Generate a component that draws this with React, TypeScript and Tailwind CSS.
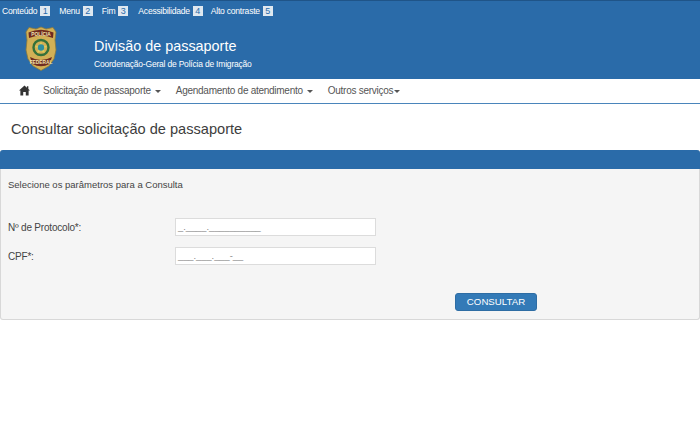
import React from 'react';

const skipLinks = [
  { label: 'Conteúdo', key: '1', gap: 'mr-[9px]' },
  { label: 'Menu', key: '2', gap: 'mr-[9px]' },
  { label: 'Fim', key: '3', gap: 'mr-[10px]' },
  { label: 'Acessibilidade', key: '4', gap: 'mr-[8px]' },
  { label: 'Alto contraste', key: '5', gap: '' },
];

const Caret = ({ gap = 'ml-[4px]' }: { gap?: string }) => (
  <span className={`${gap} inline-block w-0 h-0 border-x-[3px] border-x-transparent border-t-[3px] border-t-[#555] align-middle`} />
);

const Badge = () => (
  <svg width="32" height="45" viewBox="0 0 32 45">
    <path d="M16 1 L21 3 L28 1.5 L31 6 L30 14 L31 24 L29 33 L24 40 L16 44.5 L8 40 L3 33 L1 24 L2 14 L1 6 L4 1.5 L11 3 Z" fill="#d2b056" stroke="#8a7a3c" strokeWidth="0.8" />
    <path d="M3.5 6.5 Q16 1 28.5 6.5 L28 12 Q16 7 4 12 Z" fill="#6f2a20" />
    <path d="M5 31 Q16 37 27 31 L24.5 38 Q16 42.5 7.5 38 Z" fill="#6f2a20" />
    <circle cx="16" cy="21.5" r="7.5" fill="#d2b056" stroke="#35713a" strokeWidth="2.4" />
    <path d="M16 15.5 L17.7 19.7 L22.2 20 L18.7 22.9 L19.8 27.3 L16 24.9 L12.2 27.3 L13.3 22.9 L9.8 20 L14.3 19.7 Z" fill="#e0cc5a" />
    <circle cx="16" cy="21.5" r="3.2" fill="#2f8f9f" />
    <text x="16" y="9.8" fontSize="4.8" fontWeight="700" textAnchor="middle" fill="#f2e6b0" fontFamily="Liberation Sans, sans-serif">POLÍCIA</text>
    <text x="16" y="38" fontSize="4.8" fontWeight="700" textAnchor="middle" fill="#f2e6b0" fontFamily="Liberation Sans, sans-serif">FEDERAL</text>
  </svg>
);

const Field = ({ label, mask }: { label: string; mask: string }) => (
  <div className="flex items-center h-[18px]">
    <label className="w-[167px] text-[10px] tracking-[-0.2px] text-[#444]">{label}</label>
    <div className="w-[201px] h-[18px] bg-white border border-[#dcdcdc] pl-[2px] pt-[1px] text-[9.3px] leading-[15px] text-[#888] overflow-hidden">
      {mask}
    </div>
  </div>
);

export default function App() {
  return (
    <div className="w-[700px] h-[440px] bg-white overflow-hidden font-['Liberation_Sans',Arial,sans-serif]">
      <header className="h-[79px] bg-[#2a6ba9] border-t border-[#1f5488] text-white">
        <nav className="flex items-center h-[20px] pl-[2px] text-[8.6px] tracking-[-0.25px]">
          {skipLinks.map((link) => (
            <a key={link.key} className={`flex items-center ${link.gap}`}>
              {link.label}
              <span className="ml-[3px] w-[10px] h-[10px] bg-[#dfe8f0] text-[#2a6ba9] text-[9px] tracking-normal leading-[10px] text-center">{link.key}</span>
            </a>
          ))}
        </nav>
        <div className="flex">
          <div className="ml-[25px] w-[69px] pt-[5px]">
            <Badge />
          </div>
          <div className="pt-[15px]">
            <h1 className="text-[14.4px] leading-[20px]">Divisão de passaporte</h1>
            <p className="mt-[2px] text-[8.5px] tracking-[-0.2px] leading-[12px]">Coordenação-Geral de Polícia de Imigração</p>
          </div>
        </div>
      </header>

      <nav className="flex items-center h-[25px] pb-[1px] border-b border-[#4a85bb] text-[10px] tracking-[-0.27px] text-[#555]">
        <svg className="ml-[19px] mr-[13px]" width="11" height="11" viewBox="0 0 12 11" fill="#333">
          <path d="M6 0 L8.6 2.4 L8.6 0.8 L10.2 0.8 L10.2 3.9 L12 5.6 L10.5 5.6 L10.5 11 L7.4 11 L7.4 7.2 L4.6 7.2 L4.6 11 L1.5 11 L1.5 5.6 L0 5.6 Z" />
        </svg>
        <a>Solicitação de passaporte<Caret /></a>
        <a className="ml-[15px]">Agendamento de atendimento<Caret /></a>
        <a className="ml-[15px]">Outros serviços<Caret gap="ml-[1px]" /></a>
      </nav>

      <h2 className="mt-[15px] ml-[11px] text-[14.6px] leading-[20px] text-[#3d3d3d]">Consultar solicitação de passaporte</h2>

      <section className="mt-[11px] rounded-[3px] border-b border-x border-[#d8d8d8] bg-[#f5f5f5] h-[170px]">
        <div className="h-[19px] bg-[#2a6ba9] rounded-t-[3px] -mx-px" />
        <p className="mt-[9px] ml-[7px] text-[9.5px] leading-[14px] text-[#444]">Selecione os parâmetros para a Consulta</p>
        <div className="mt-[26px] ml-[7px] flex flex-col gap-[11px]">
          <Field label="Nº de Protocolo*:" mask="_.____.__________" />
          <Field label="CPF*:" mask="___.___.___-__" />
        </div>
        <div className="mt-[28px] ml-[454px]">
          <button className="block w-[82px] h-[18px] rounded-[3px] bg-[#337ab7] border border-[#2e6da4] text-white text-[9.7px] leading-none">CONSULTAR</button>
        </div>
      </section>
    </div>
  );
}
